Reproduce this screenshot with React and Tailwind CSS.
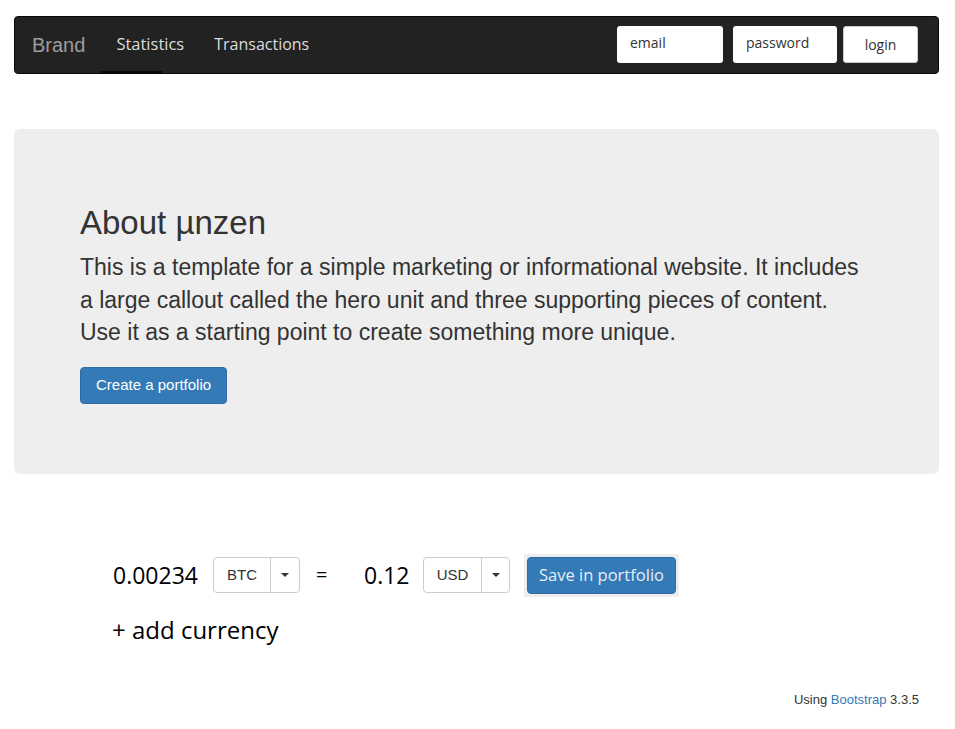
export default function App() {
  const ui = { fontFamily: '"Open Sans", "DejaVu Sans", sans-serif' };
  const arial = { fontFamily: '"Liberation Sans", Arial, sans-serif' };
  return (
    <div className="bg-white min-h-[729px] w-[955px] pt-4 pl-[14px] pr-[16px]" style={arial}>
      {/* navbar */}
      <div className="h-[58px] bg-[#222222] border border-[#080808] rounded-[4px] flex items-stretch pl-[17px] pr-[20px]">
        <div className="flex items-center text-[20px] text-[#9d9d9d] mr-[16px]" style={arial}>Brand</div>
        <div className="flex items-stretch text-[16px] text-[#dddddd]" style={ui}>
          <div className="relative flex items-center px-[15px] pb-[2px] text-[16.5px]">
            Statistics
            <div className="absolute left-0 w-[61px] bottom-[-1px] h-[3px] bg-[#080808]" />
          </div>
          <div className="flex items-center px-[15px] pb-[2px]">Transactions</div>
        </div>
        <div className="ml-auto flex items-center gap-[10px] pb-[2px]" style={ui}>
          <div className="w-[106px] h-[37px] bg-white rounded-[3px] flex items-center pl-[13px] text-[14px] text-[#333] pb-[3px]">email</div>
          <div className="flex items-center gap-[6px]">
            <div className="w-[104px] h-[37px] bg-white rounded-[3px] flex items-center pl-[13px] text-[14px] text-[#333] pb-[3px]">password</div>
            <div className="w-[75px] h-[37px] bg-white rounded-[3px] border border-[#ccc] flex items-center justify-center text-[14px] text-[#333]">login</div>
          </div>
        </div>
      </div>

      {/* jumbotron */}
      <div className="mt-[55px] bg-[#eeeeee] rounded-[6px] h-[345px] pl-[66px] pr-[66px] pt-[72px]">
        <h1 className="text-[33px] leading-[44px] text-[#333]" style={arial}>About µnzen</h1>
        <p className="mt-[6px] text-[23px] leading-[32.5px] text-[#333]" style={arial}>
          This is a template for a simple marketing or informational website. It includes a large callout called the hero unit and three supporting pieces of content. Use it as a starting point to create something more unique.
        </p>
        <button className="mt-[18px] h-[37px] px-[15px] bg-[#337ab7] border border-[#2e6da4] rounded-[4px] text-white text-[15px]" style={arial}>Create a portfolio</button>
      </div>

      {/* converter */}
      <div className="mt-[79px] pl-[99px]" style={ui}>
        <div className="flex items-center h-[44px]">
          <span className="text-[23px] text-black w-[100px]">0.00234</span>
          <div className="flex h-[36px] border border-[#ccc] rounded-[4px] bg-white">
            <div className="w-[57px] flex items-center justify-center text-[15px] text-[#333] border-r border-[#ccc]" style={arial}>BTC</div>
            <div className="w-[28px] flex items-center justify-center">
              <div className="w-0 h-0 border-l-[4px] border-r-[4px] border-t-[4px] border-l-transparent border-r-transparent border-t-[#333]" />
            </div>
          </div>
          <span className="text-[20px] text-black ml-[16px] w-[48px]">=</span>
          <span className="text-[23px] text-black w-[59px]">0.12</span>
          <div className="flex h-[36px] border border-[#ccc] rounded-[4px] bg-white">
            <div className="w-[58px] flex items-center justify-center text-[15px] text-[#333] border-r border-[#ccc]" style={arial}>USD</div>
            <div className="w-[27px] flex items-center justify-center">
              <div className="w-0 h-0 border-l-[4px] border-r-[4px] border-t-[4px] border-l-transparent border-r-transparent border-t-[#333]" />
            </div>
          </div>
          <div className="ml-[14px] p-[3px] bg-[#eeeeee]">
            <button className="h-[37px] w-[149px] bg-[#337ab7] border border-[#2e6da4] rounded-[4px] text-[#e8eef5] text-[16.5px]">Save in portfolio</button>
          </div>
        </div>
        <div className="mt-[15px] -ml-[1px] text-[24px] text-black">+ add currency</div>
      </div>

      {/* footer */}
      <div className="mt-[42px] pr-[20px] text-right text-[13px] text-[#333]" style={arial}>
        Using <span className="text-[#337ab7]">Bootstrap</span> 3.3.5
      </div>
    </div>
  );
}
